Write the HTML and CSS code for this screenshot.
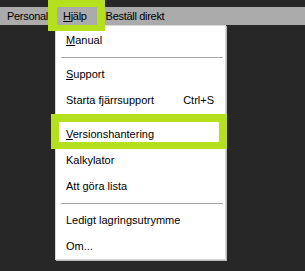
FILE: index.html
```html
<!DOCTYPE html>
<html lang="sv">
<head>
    <meta charset="UTF-8">
    <title>Hjälp</title>
    <link rel="stylesheet" href="styles.css">
</head>
<body>
    <div class="top-strip"></div>
    <nav class="menubar">
        <div class="menubar-item first">Personal</div>
        <div class="menubar-item open callout-top"><u>H</u>jälp</div>
        <div class="menubar-item">Beställ direkt</div>
    </nav>
    <ul class="menu">
        <li class="menu-item"><span><u>M</u>anual</span></li>
        <li class="menu-sep"></li>
        <li class="menu-item"><span><u>S</u>upport</span></li>
        <li class="menu-item"><span>Starta fjärrsupport</span><span>Ctrl+S</span></li>
        <li class="menu-sep"></li>
        <li class="menu-item callout-row"><span><u>V</u>ersionshantering</span></li>
        <li class="menu-item"><span>Kalkylator</span></li>
        <li class="menu-item"><span>Att göra lista</span></li>
        <li class="menu-sep"></li>
        <li class="menu-item"><span>Ledigt lagringsutrymme</span></li>
        <li class="menu-item"><span>Om...</span></li>
    </ul>
</body>
</html>
```
FILE: styles.css
```css
html, body {min-height: 100%;}
body {
    margin: 0;
    min-height: 271px;
    background: #272727;
    font: 11px "Liberation Sans", Arial, sans-serif;
    color: #000;
}
u {text-decoration: underline; text-underline-offset: 1px;}

.top-strip {height: 7px;}
.menubar {
    display: flex;
    height: 18px;
    padding-left: 1px;
    background: #ababab;
    letter-spacing: -0.3px;
}
.menubar-item {
    position: relative;
    padding: 0 8px;
    line-height: 18px;
    white-space: nowrap;
}
.menubar-item.first {padding: 0 7px 0 6px;}
.menubar-item.open {padding-right: 11px;}

.menu {
    position: relative;
    width: 169px;
    margin: 0 0 0 55px;
    padding: 1px 0 0;
    list-style: none;
    background: #fff;
    border: 1px solid #d9d9d9;
    box-shadow: 1px 1px 0 #b9b9b9;
}
.menu-item {
    position: relative;
    display: flex;
    justify-content: space-between;
    height: 26px;
    line-height: 26px;
    padding: 0 11px 0 10px;
}
.menu-sep {
    height: 1px;
    margin: 4px 2px 3px 5px;
    background: #a6a6a6;
}

/* green annotation boxes */
.callout-top::after,
.callout-row::after {
    content: "";
    position: absolute;
    border: solid #b4e01e;
    pointer-events: none;
    z-index: 2;
}
.callout-top::after {
    left: -7px; right: -7px; top: -7px; bottom: -6px;
    border-width: 7px 8px 6px 9px;
}
.callout-row::after {
    left: -5px; right: -2px; top: -7px; bottom: -2px;
    border-width: 8px 8px 7px 8px;
}
```
